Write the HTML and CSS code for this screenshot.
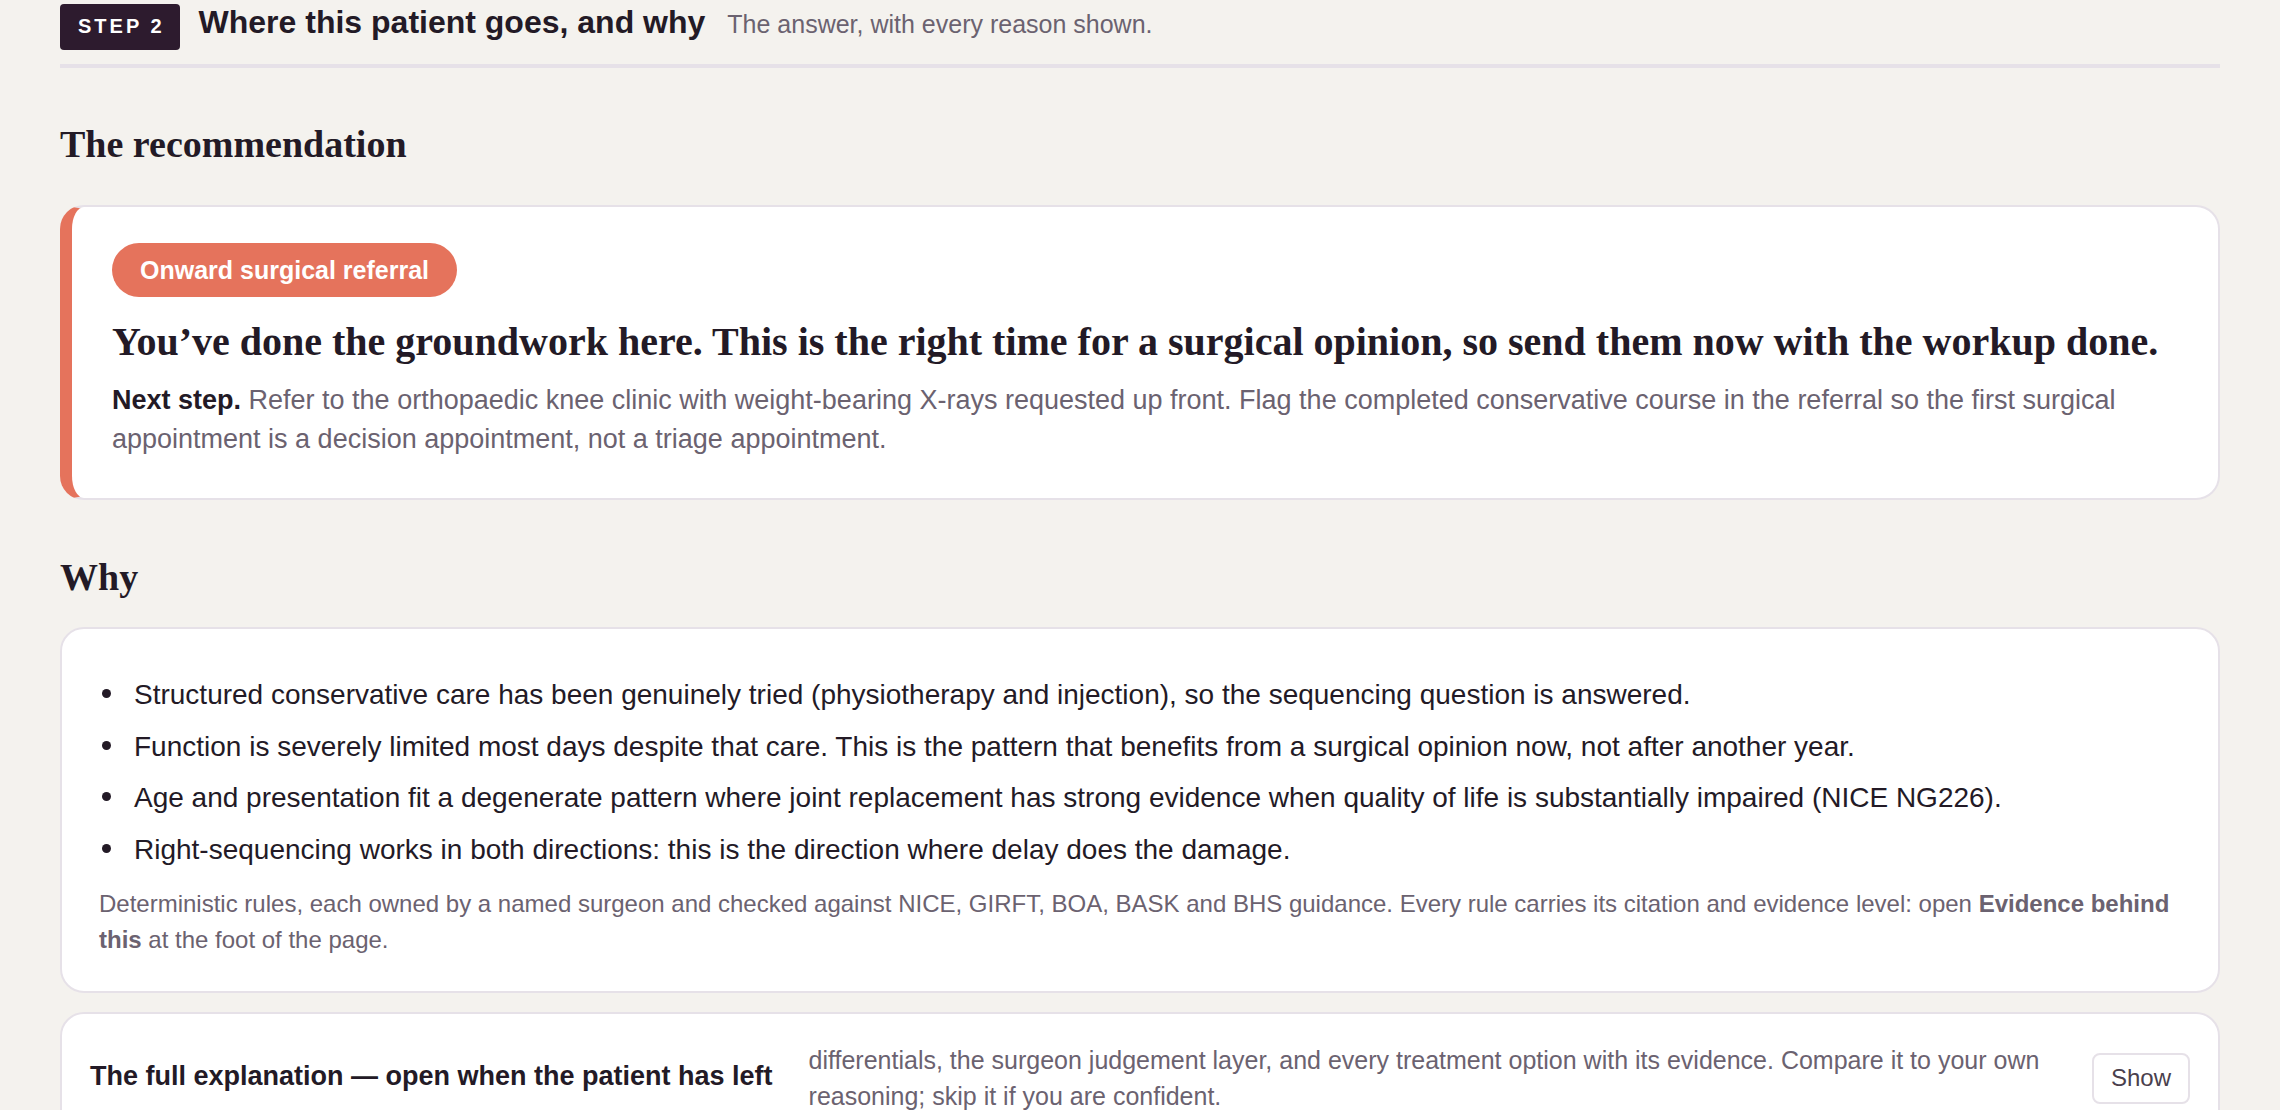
FILE: index.html
```html
<!DOCTYPE html>
<html lang="en">

<head>
    <meta charset="UTF-8">
    <meta name="viewport" content="width=device-width, initial-scale=1.0">
    <title>Step 2 - Where this patient goes</title>
    <link rel="stylesheet" href="styles.css">
</head>

<body>
    <header class="step-head">
        <span class="step-badge">STEP 2</span>
        <h1 class="step-title">Where this patient goes, and why</h1>
        <span class="step-sub">The answer, with every reason shown.</span>
    </header>

    <h2 class="section-title first">The recommendation</h2>
    <div class="card rec-card">
        <span class="pill">Onward surgical referral</span>
        <h3 class="rec-title">You’ve done the groundwork here. This is the right time for a surgical opinion, so send them now with the workup done.</h3>
        <p class="rec-next"><strong>Next step.</strong> Refer to the orthopaedic knee clinic with weight-bearing X-rays requested up front. Flag the completed conservative course in the referral so the first surgical appointment is a decision appointment, not a triage appointment.</p>
    </div>

    <h2 class="section-title">Why</h2>
    <div class="card why-card">
        <ul class="reasons">
            <li>Structured conservative care has been genuinely tried (physiotherapy and injection), so the sequencing question is answered.</li>
            <li>Function is severely limited most days despite that care. This is the pattern that benefits from a surgical opinion now, not after another year.</li>
            <li>Age and presentation fit a degenerate pattern where joint replacement has strong evidence when quality of life is substantially impaired (NICE NG226).</li>
            <li>Right-sequencing works in both directions: this is the direction where delay does the damage.</li>
        </ul>
        <p class="note">Deterministic rules, each owned by a named surgeon and checked against NICE, GIRFT, BOA, BASK and BHS guidance. Every rule carries its citation and evidence level: open <strong>Evidence behind this</strong> at the foot of the page.</p>
    </div>

    <div class="card explain-card">
        <div class="explain-title">The full explanation — open when the patient has left</div>
        <p class="explain-text">differentials, the surgeon judgement layer, and every treatment option with its evidence. Compare it to your own reasoning; skip it if you are confident.</p>
        <button class="show-btn">Show</button>
    </div>
</body>

</html>
```

FILE: styles.css
```css
body {
    margin: 0;
    padding: 4px 60px 40px;
    font-family: "Liberation Sans", Arial, sans-serif;
    background-color: #f4f2ee;
    color: #231a26;
}

.step-head {
    display: flex;
    align-items: baseline;
    gap: 19px;
    padding-bottom: 14px;
    border-bottom: 4px solid #e6e1e8;
}

.step-badge {
    background-color: #2d1b2e;
    color: #fff;
    font-size: 20px;
    font-weight: bold;
    letter-spacing: 3px;
    padding: 11px 15px 12px 18px;
    border-radius: 4px;
}

.step-title {
    margin: 0;
    font-size: 32px;
    font-weight: bold;
}

.step-sub {
    margin-left: 3px;
    font-size: 25px;
    color: #6b6270;
}

.section-title {
    font-family: "Liberation Serif", "Times New Roman", serif;
    font-size: 38px;
    line-height: 1.2;
    margin: 55px 0 27px;
}

.section-title.first {
    margin: 54px 0 37px;
}

.card {
    background-color: #fff;
    border: 2px solid #e6e1e8;
    border-radius: 24px;
}

.rec-card {
    border-left: 12px solid #e5735c;
    padding: 36px 40px 39px;
}

.pill {
    display: inline-block;
    background-color: #e5735c;
    color: #fff;
    font-size: 25px;
    font-weight: bold;
    padding: 13px 28px 12px;
    border-radius: 30px;
}

.rec-title {
    font-family: "Liberation Serif", "Times New Roman", serif;
    font-size: 40px;
    line-height: 1.2;
    margin: 21px 0 15px;
}

.rec-next {
    margin: 0;
    font-size: 27px;
    line-height: 1.45;
    color: #6b6270;
}

.rec-next strong {
    color: #231a26;
}

.why-card {
    padding: 29px 37px 33px;
}

.reasons {
    list-style: none;
    margin: 16px 0 15px;
    padding-left: 35px;
    font-size: 28px;
    line-height: 1.5;
}

.reasons li {
    margin-bottom: 9.5px;
}

.reasons li::before {
    content: "";
    display: inline-block;
    width: 9px;
    height: 9px;
    border-radius: 50%;
    background-color: currentColor;
    margin: 0 23px 6px -32px;
}

.reasons li:last-child {
    margin-bottom: 0;
}

.note {
    margin: 0;
    font-size: 24px;
    line-height: 1.5;
    color: #6b6270;
}

.explain-card {
    margin-top: 19px;
    padding: 28px 28px 24px;
    display: flex;
    align-items: center;
    gap: 36px;
}

.explain-title {
    font-size: 27px;
    font-weight: bold;
    white-space: nowrap;
    padding-bottom: 4px;
}

.explain-text {
    flex: 1;
    margin: 0;
    font-size: 25px;
    line-height: 1.46;
    color: #6b6270;
}

.show-btn {
    font-family: inherit;
    font-size: 24px;
    color: #4a3f4d;
    background-color: #fff;
    border: 2px solid #e6e1e8;
    border-radius: 8px;
    padding: 9px 17px 10px;
    cursor: pointer;
}

.show-btn:hover {
    background-color: #f4f2ee;
}
```
